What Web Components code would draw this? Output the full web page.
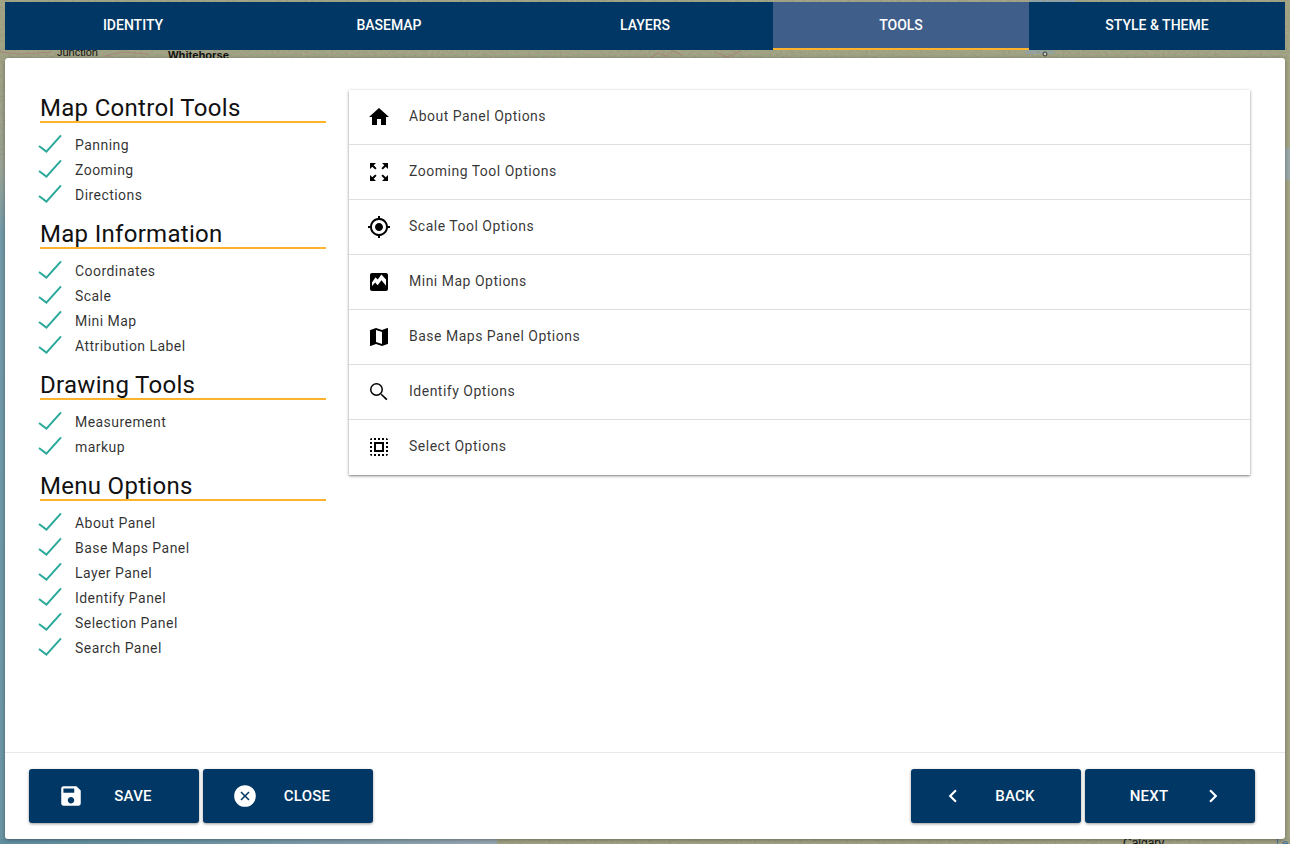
<!DOCTYPE html>
<html lang="en"><head><meta charset="utf-8"><title>Tools</title>
<style>
html,body{margin:0;padding:0;height:100%}
body{font-family:Roboto,"Liberation Sans",sans-serif;overflow:hidden;background:#a3a586}
</style></head><body>
<wizard-app>
  <map-backdrop slot="map"></map-backdrop>
  <wizard-tabs slot="tabs">
    <wizard-tab>IDENTITY</wizard-tab><wizard-tab>BASEMAP</wizard-tab><wizard-tab>LAYERS</wizard-tab><wizard-tab active>TOOLS</wizard-tab><wizard-tab>STYLE &amp; THEME</wizard-tab>
  </wizard-tabs>
  <wizard-modal slot="modal">
    <tool-summary slot="side">
      <tool-section title="Map Control Tools"><check-item>Panning</check-item><check-item>Zooming</check-item><check-item>Directions</check-item></tool-section>
      <tool-section title="Map Information"><check-item>Coordinates</check-item><check-item>Scale</check-item><check-item>Mini Map</check-item><check-item>Attribution Label</check-item></tool-section>
      <tool-section title="Drawing Tools"><check-item>Measurement</check-item><check-item>markup</check-item></tool-section>
      <tool-section title="Menu Options"><check-item>About Panel</check-item><check-item>Base Maps Panel</check-item><check-item>Layer Panel</check-item><check-item>Identify Panel</check-item><check-item>Selection Panel</check-item><check-item>Search Panel</check-item></tool-section>
    </tool-summary>
    <option-list slot="main">
      <option-row icon="home">About Panel Options</option-row>
      <option-row icon="zoom">Zooming Tool Options</option-row>
      <option-row icon="gps">Scale Tool Options</option-row>
      <option-row icon="image">Mini Map Options</option-row>
      <option-row icon="map">Base Maps Panel Options</option-row>
      <option-row icon="search">Identify Options</option-row>
      <option-row icon="select">Select Options</option-row>
    </option-list>
    <action-button slot="left" icon="save">SAVE</action-button>
    <action-button slot="left" icon="cancel">CLOSE</action-button>
    <action-button slot="right" icon="back">BACK</action-button>
    <action-button slot="right" icon="next" trailing>NEXT</action-button>
  </wizard-modal>
</wizard-app>
<script>
const ICONS={
home:'M10 20v-6h4v6h5v-8h3L12 3 2 12h3v8z',
zoom:'M15 3l2.3 2.3-2.89 2.87 1.42 1.42L18.7 6.7 21 9V3zM3 9l2.3-2.3 2.87 2.89 1.42-1.42L6.7 5.3 9 3H3zm6 12l-2.3-2.3 2.89-2.87-1.42-1.42L5.3 17.3 3 15v6zm12-6l-2.3 2.3-2.87-2.89-1.42 1.42 2.89 2.87L15 21h6z',
gps:'M12 8c-2.21 0-4 1.79-4 4s1.79 4 4 4 4-1.79 4-4-1.79-4-4-4zm8.94 3c-.46-4.17-3.77-7.48-7.94-7.94V1h-2v2.06C6.83 3.52 3.52 6.83 3.06 11H1v2h2.06c.46 4.17 3.77 7.48 7.94 7.94V23h2v-2.06c4.17-.46 7.48-3.77 7.94-7.94H23v-2h-2.06zM12 19c-3.87 0-7-3.13-7-7s3.13-7 7-7 7 3.13 7 7-3.13 7-7 7z',
image:'M5 3h14c1.1 0 2 .9 2 2v14c0 1.1-.9 2-2 2H5c-1.1 0-2-.9-2-2V5c0-1.1.9-2 2-2zM5 12.5V16l3.2-3.4 2.4 2.6 3.9-5 4.5 5.5V9.5l-4.6-5-3.7 5-2.2-2.3z',
map:'M20.5 3l-.16.03L15 5.1 9 3 3.36 4.9c-.21.07-.36.25-.36.48V20.5c0 .28.22.5.5.5l.16-.03L9 18.9l6 2.1 5.64-1.9c.21-.07.36-.25.36-.48V3.5c0-.28-.22-.5-.5-.5zM15 19l-6-2.11V5l6 2.11V19z',
search:'M9.5 3a6.5 6.5 0 1 0 0 13 6.5 6.5 0 0 0 0-13zm0 1.5a5 5 0 1 1 0 10 5 5 0 0 1 0-10zM13.7 14.7l1-1 5.8 5.3-1.3 1.3z',
select:'M3 5h2V3c-1.1 0-2 .9-2 2zm0 8h2v-2H3v2zm4 8h2v-2H7v2zM3 9h2V7H3v2zm10-6h-2v2h2V3zm6 0v2h2c0-1.1-.9-2-2-2zM5 21v-2H3c0 1.1.9 2 2 2zm-2-4h2v-2H3v2zM9 3H7v2h2V3zm2 18h2v-2h-2v2zm8-8h2v-2h-2v2zm0 8c1.1 0 2-.9 2-2h-2v2zm0-12h2V7h-2v2zm0 8h2v-2h-2v2zm-4 4h2v-2h-2v2zm0-16h2V3h-2v2zM7 17h10V7H7v10zm2-8h6v6H9V9z',
save:'M17 3H5c-1.11 0-2 .9-2 2v14c0 1.1.89 2 2 2h14c1.1 0 2-.9 2-2V7l-4-4zm-5 16c-1.66 0-3-1.34-3-3s1.34-3 3-3 3 1.34 3 3-1.34 3-3 3zm3-10H5V5h10v4z',
cancel:'M12 2a10 10 0 1 0 0 20 10 10 0 0 0 0-20zM12 11l3.2-3.2 1 1L13 12l3.2 3.2-1 1L12 13l-3.2 3.2-1-1L11 12 7.8 8.8l1-1z',
back:'M15.41 7.41L14 6l-6 6 6 6 1.41-1.41L10.83 12z',
next:'M10 6L8.59 7.41 13.17 12l-4.58 4.59L10 18l6-6z'};
const def=(name,html,extra)=>{
  const t=document.createElement('template');t.innerHTML=html;
  customElements.define(name,class extends HTMLElement{
    constructor(){super();this.attachShadow({mode:'open'}).appendChild(t.content.cloneNode(true));}
    connectedCallback(){extra&&extra(this,this.shadowRoot);}
  });
};
const setIcon=(host,root)=>{const p=root.querySelector('path');if(p)p.setAttribute('d',ICONS[host.getAttribute('icon')]||'');};

def('wizard-app',`<style>
:host{display:block;position:relative;width:1290px;height:844px;overflow:hidden}
.stack{position:relative;display:flex;flex-direction:column;gap:8px;padding:2px 5px 0;box-sizing:border-box;height:839px}
</style><slot name="map"></slot><div class="stack"><slot name="tabs"></slot><slot name="modal"></slot></div>`);

def('map-backdrop',`<style>
:host{display:block;position:absolute;inset:0}
svg{display:block;width:1290px;height:844px}
text{font-family:"Liberation Sans",sans-serif;font-size:10px;fill:#111}
</style><svg viewBox="0 0 1290 844" xmlns="http://www.w3.org/2000/svg">
<defs>
<linearGradient id="sea" x1="0" y1="0" x2="0" y2="1"><stop offset="0" stop-color="#a3a586"/><stop offset=".14" stop-color="#9aa396"/><stop offset=".22" stop-color="#729aa9"/><stop offset="1" stop-color="#6b95a5"/></linearGradient>
<linearGradient id="seab" x1="0" y1="0" x2="1" y2="0"><stop offset="0" stop-color="#5f8f9f"/><stop offset=".4" stop-color="#6e96a6"/><stop offset="1" stop-color="#98a8b2"/></linearGradient>
<filter id="n" x="0" y="0" width="100%" height="100%"><feTurbulence type="fractalNoise" baseFrequency=".35 .5" numOctaves="2" seed="4"/><feColorMatrix values="0 0 0 0 .3  0 0 0 0 .3  0 0 0 0 .2  0 0 0 1.6 -.6"/></filter>
</defs>
<rect width="1290" height="844" fill="#a3a586"/>
<rect y="60" width="6" height="784" fill="url(#sea)"/>
<rect x="0" y="839" width="497" height="5" fill="url(#seab)"/>
<rect x="1285" y="148" width="5" height="32" fill="#9aa9a8"/>
<rect x="1030" y="0" width="45" height="2" fill="#8ea3ae"/>
<rect x="1025" y="50" width="30" height="4" rx="2" fill="#93a5a6"/>
<rect width="1290" height="60" filter="url(#n)"/>
<rect x="0" y="60" width="6" height="100" filter="url(#n)"/>
<rect x="497" y="838" width="793" height="6" filter="url(#n)"/>
<path d="M0 52l22 2 30-2M105 56l18-4 26 2M650 58l8-5 8 3 7-5 9 4M715 52l12 5 14-6" fill="none" stroke="#a8867a" stroke-width="1"/>
<circle cx="1045" cy="54" r="2" fill="#c9ccbb" stroke="#333" stroke-width="1"/>
<text x="57" y="55.5" style="font-size:11px">Junction</text>
<text x="168" y="59" font-weight="700" style="font-size:11.2px">Whitehorse</text>
<text x="1123" y="847" style="font-size:12px">Calgary</text>
<text x="1276" y="847" style="font-size:11px;fill:#3a6ea5">Le</text>
</svg>`);

def('wizard-tabs',`<style>
:host{display:flex;height:48px;flex:none}
</style><slot></slot>`);

def('wizard-tab',`<style>
:host{display:flex;flex:1 1 0;align-items:center;justify-content:center;box-sizing:border-box;background:#003764;color:#fff;font:500 14px/20px Roboto,sans-serif;padding-bottom:2px}
:host([active]){background:#3f5e8a;border-bottom:2px solid #fdb32b;padding-bottom:0}
</style><slot></slot>`);

def('wizard-modal',`<style>
:host{display:flex;flex-direction:column;flex:1;min-height:0;background:#fff;border-radius:3px;box-shadow:0 1px 4px rgba(0,0,0,.35);color:rgba(0,0,0,.87)}
.body{flex:1;display:flex;gap:23px;padding:32px 35px 0 35px;min-height:0}
.foot{flex:none;display:flex;justify-content:space-between;border-top:1px solid #e9e9e9;padding:16px 30px 16px 24px}
.grp{display:flex;gap:4px}
</style><div class="body"><slot name="side"></slot><slot name="main"></slot></div>
<div class="foot"><div class="grp"><slot name="left"></slot></div><div class="grp"><slot name="right"></slot></div></div>`);

def('tool-summary',`<style>
:host{display:flex;flex-direction:column;gap:12px;width:286px;flex:none;padding-top:4px}
</style><slot></slot>`);

def('tool-section',`<style>
:host{display:block}
h2{margin:0 0 10px;padding-top:2px;font:400 24px/25px Roboto,sans-serif;letter-spacing:.3px;color:#111;border-bottom:2px solid #fdb32b}
</style><h2></h2><slot></slot>`,(h,r)=>{r.querySelector('h2').textContent=h.getAttribute('title');h.removeAttribute('title');});

def('check-item',`<style>
:host{display:flex;align-items:center;height:25px;font:400 14px/25px Roboto,sans-serif;letter-spacing:.45px;color:rgba(0,0,0,.82)}
svg{flex:none;width:24px;height:20px;margin:-4px 13px 0 -2px}
</style><svg viewBox="0 0 24 20"><path d="M1 12l7.4 5.6L23 1.4" fill="none" stroke="#2ba99b" stroke-width="2"/></svg><slot></slot>`);

def('option-list',`<style>
:host{display:block;flex:1;align-self:flex-start;background:#fff;box-shadow:0 1px 3px rgba(0,0,0,.4),0 1px 1px rgba(0,0,0,.14)}
</style><slot></slot>`);

def('option-row',`<style>
:host{display:flex;align-items:center;gap:18px;box-sizing:border-box;height:55px;padding-left:18px;border-bottom:1px solid #dedede;font:400 14px/20px Roboto,sans-serif;letter-spacing:.5px;color:rgba(0,0,0,.8)}
:host(:last-child){border-bottom-color:transparent}
svg{flex:none;width:24px;height:24px;fill:#000;fill-rule:evenodd}
span{margin-top:-2px}
</style><svg viewBox="0 0 24 24"><path/></svg><span><slot></slot></span>`,setIcon);

def('action-button',`<style>
:host{display:flex;align-items:center;box-sizing:border-box;width:170px;height:54px;padding-left:29px;background:#003764;color:#fff;border-radius:3px;box-shadow:0 1px 3px rgba(0,0,0,.4);font:500 15px/20px Roboto,sans-serif;letter-spacing:.2px}
:host([trailing]){flex-direction:row-reverse;padding-left:0;padding-right:29px}
:host([trailing]) span{margin-right:2px}
svg{flex:none;width:26px;height:26px;fill:#fff;fill-rule:evenodd}
span{flex:none;width:98px;text-align:center}
</style><svg viewBox="0 0 24 24"><path/></svg><span><slot></slot></span>`,setIcon);
</script>
</body></html>
